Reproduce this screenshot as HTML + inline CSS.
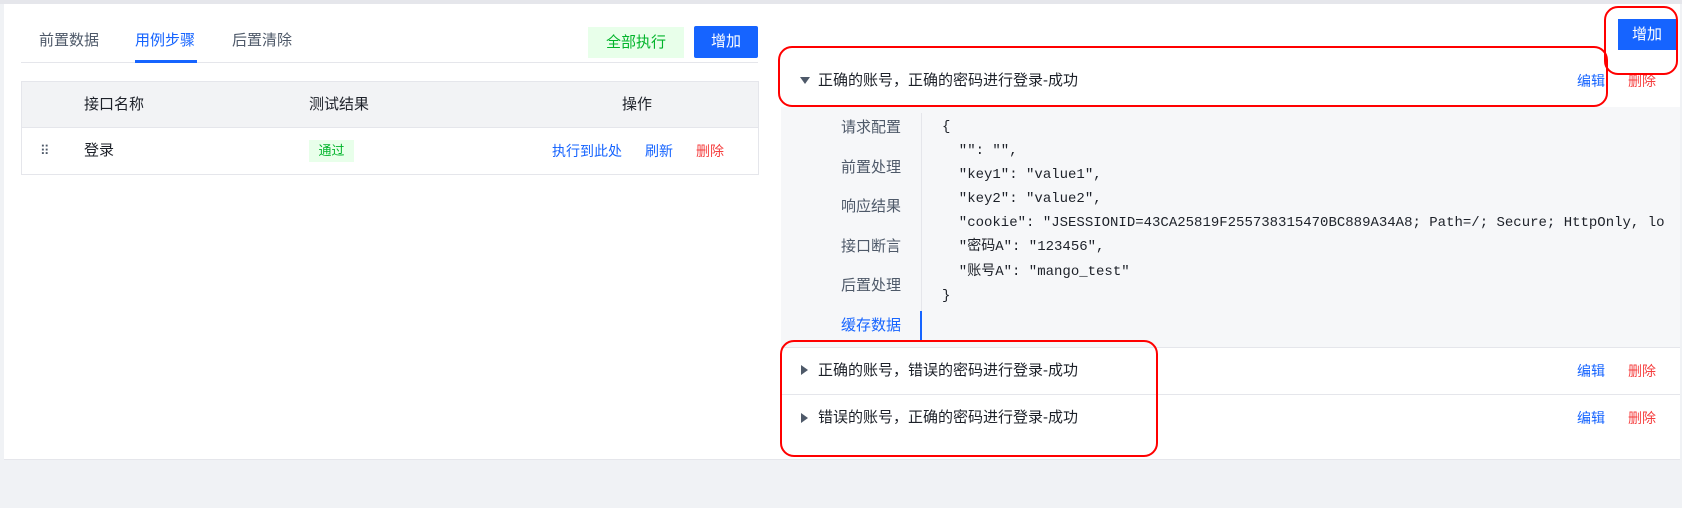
<!DOCTYPE html>
<html><head><meta charset="utf-8"><style>
body{margin:0;width:1682px;height:508px;background:#f0f2f5;font-family:"Liberation Sans","Noto Sans CJK SC",sans-serif;position:relative;overflow:hidden;color:#1d2129}
.a{position:absolute;white-space:nowrap}
.card{position:absolute;left:4px;top:4px;width:1676px;height:455px;background:#fff}
.t{font-size:15px;line-height:20px}
.blue{color:#1664ff}.red{color:#f53f3f}
.mono{font-family:"Liberation Mono","Noto Sans CJK SC",monospace;font-size:14px;color:#1d2129}
.rb{position:absolute;border:2px solid #f00;border-radius:14px}
</style></head><body>
<div style="position:absolute;left:0;top:0;width:1682px;height:4px;background:#e5e6eb"></div>
<div class="card"></div>
<div class="a t" style="left:39px;top:31px;color:#4e5969">前置数据</div>
<div class="a t blue" style="left:135px;top:31px">用例步骤</div>
<div class="a t" style="left:232px;top:31px;color:#4e5969">后置清除</div>
<div class="a" style="left:21px;top:62px;width:737px;height:1px;background:#e5e6eb"></div>
<div class="a" style="left:135px;top:60px;width:62px;height:3px;background:#1664ff"></div>
<div class="a t" style="left:588px;top:27px;width:96px;height:31px;background:#e8ffea;color:#00b42a;text-align:center;line-height:31px">全部执行</div>
<div class="a t" style="left:694px;top:26px;width:64px;height:32px;background:#1664ff;color:#fff;text-align:center;line-height:32px;border-radius:2px">增加</div>
<div class="a" style="left:21px;top:81px;width:736px;height:92px;border:1px solid #e5e6eb"></div>
<div class="a" style="left:22px;top:82px;width:736px;height:45px;background:#f2f3f5;border-bottom:1px solid #e5e6eb"></div>
<div class="a t" style="left:84px;top:95px">接口名称</div>
<div class="a t" style="left:309px;top:95px">测试结果</div>
<div class="a t" style="left:622px;top:95px">操作</div>
<div class="a" style="left:40px;top:144px;font-size:13px;line-height:13px;color:#4e5969;letter-spacing:-1px">⠿</div>
<div class="a t" style="left:84px;top:141px">登录</div>
<div class="a" style="left:309px;top:140px;width:45px;height:22px;background:#e8ffea;color:#00b42a;font-size:13px;line-height:22px;text-align:center">通过</div>
<div class="a blue" style="left:552px;top:141px;font-size:14px;line-height:20px">执行到此处</div>
<div class="a blue" style="left:645px;top:141px;font-size:14px;line-height:20px">刷新</div>
<div class="a red" style="left:696px;top:141px;font-size:14px;line-height:20px">删除</div>
<div class="a t" style="left:1618px;top:19px;width:58px;height:31px;background:#1664ff;color:#fff;text-align:center;line-height:31px">增加</div>
<div class="a" style="left:800px;top:77px;width:0;height:0;border-left:5px solid transparent;border-right:5px solid transparent;border-top:7px solid #4e5969"></div>
<div class="a t" style="left:818px;top:71px">正确的账号，正确的密码进行登录-成功</div>
<div class="a blue" style="left:1577px;top:71px;font-size:14px;line-height:20px">编辑</div>
<div class="a red" style="left:1628px;top:71px;font-size:14px;line-height:20px">删除</div>
<div class="a" style="left:781px;top:107px;width:899px;height:240px;background:#f6f7f9"></div>
<div class="a" style="left:921px;top:113px;width:1px;height:228px;background:#e5e6eb"></div>
<div class="a" style="left:920px;top:311px;width:2px;height:30px;background:#1664ff"></div>
<div class="a t" style="left:841px;top:118px;color:#4e5969">请求配置</div>
<div class="a t" style="left:841px;top:158px;color:#4e5969">前置处理</div>
<div class="a t" style="left:841px;top:197px;color:#4e5969">响应结果</div>
<div class="a t" style="left:841px;top:237px;color:#4e5969">接口断言</div>
<div class="a t" style="left:841px;top:276px;color:#4e5969">后置处理</div>
<div class="a t blue" style="left:841px;top:316px">缓存数据</div>
<div class="a mono" style="left:942px;top:115px;line-height:24.1px;width:738px;overflow:hidden">{<br>&nbsp;&nbsp;"": "",<br>&nbsp;&nbsp;"key1": "value1",<br>&nbsp;&nbsp;"key2": "value2",<br>&nbsp;&nbsp;"cookie": "JSESSIONID=43CA25819F255738315470BC889A34A8; Path=/; Secure; HttpOnly, lo<br>&nbsp;&nbsp;"密码A": "123456",<br>&nbsp;&nbsp;"账号A": "mango_test"<br>}</div>
<div class="a" style="left:781px;top:347px;width:899px;height:1px;background:#e5e6eb"></div>
<div class="a" style="left:781px;top:394px;width:899px;height:1px;background:#e5e6eb"></div>
<div class="a" style="left:801px;top:365px;width:0;height:0;border-top:5px solid transparent;border-bottom:5px solid transparent;border-left:7px solid #4e5969"></div>
<div class="a t" style="left:818px;top:361px">正确的账号，错误的密码进行登录-成功</div>
<div class="a blue" style="left:1577px;top:361px;font-size:14px;line-height:20px">编辑</div>
<div class="a red" style="left:1628px;top:361px;font-size:14px;line-height:20px">删除</div>
<div class="a" style="left:801px;top:413px;width:0;height:0;border-top:5px solid transparent;border-bottom:5px solid transparent;border-left:7px solid #4e5969"></div>
<div class="a t" style="left:818px;top:408px">错误的账号，正确的密码进行登录-成功</div>
<div class="a blue" style="left:1577px;top:408px;font-size:14px;line-height:20px">编辑</div>
<div class="a red" style="left:1628px;top:408px;font-size:14px;line-height:20px">删除</div>
<div class="a" style="left:4px;top:459px;width:1676px;height:1px;background:#e5e6eb"></div>
<div class="rb" style="left:1604px;top:6px;width:70px;height:65px"></div>
<div class="rb" style="left:778px;top:46px;width:826px;height:57px"></div>
<div class="rb" style="left:780px;top:340px;width:374px;height:113px"></div>
</body></html>
